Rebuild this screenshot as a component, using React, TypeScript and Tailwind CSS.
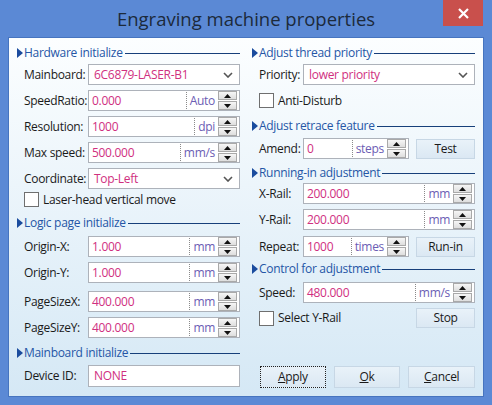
import { ReactNode } from "react";

const PINK = "text-[#d0307f]";
const UNIT = "text-[#6b5db4]";

function Heading({ label }: { label: string }) {
  return (
    <div className="h-[14px] flex items-center">
      <svg className="w-[6px] h-[10px] ml-[1px] mr-[1px]" viewBox="0 0 6 10">
        <path d="M0 0 L6 5 L0 10 Z" fill="#1b4c9e" />
      </svg>
      <span className="text-[#2556a6] leading-none whitespace-nowrap">{label}</span>
      <div className="flex-1 h-px bg-[#173f7a] ml-[2px]" />
    </div>
  );
}

function Spinner() {
  return (
    <div className="flex flex-col gap-px w-[19px] mr-[2px] shrink-0">
      <div className="h-[9px] border border-[#a9a9a9] bg-gradient-to-b from-[#f6f6f6] to-[#dedede] flex items-center justify-center">
        <svg className="w-[7px] h-[4px]" viewBox="0 0 7 4">
          <path d="M0 4 L3.5 0 L7 4 Z" fill="#111" />
        </svg>
      </div>
      <div className="h-[9px] border border-[#a9a9a9] bg-gradient-to-b from-[#f6f6f6] to-[#dedede] flex items-center justify-center">
        <svg className="w-[7px] h-[4px]" viewBox="0 0 7 4">
          <path d="M0 0 L7 0 L3.5 4 Z" fill="#111" />
        </svg>
      </div>
    </div>
  );
}

function NumBox({ value, unit, className = "" }: { value: string; unit: string; className?: string }) {
  return (
    <div className={`h-[21px] bg-white border border-[#adb2ba] flex items-center ${className}`}>
      <span className={`flex-1 pl-[3px] ${PINK}`}>{value}</span>
      <span className={`h-[17px] border-l border-dotted border-[#8a8a8a] pl-[3px] pr-[3px] flex items-center ${UNIT}`}>
        {unit}
      </span>
      <Spinner />
    </div>
  );
}

function Combo({ value, className = "" }: { value: string; className?: string }) {
  return (
    <div className={`h-[21px] bg-white border border-[#adb2ba] flex items-center ${className}`}>
      <span className={`flex-1 pl-[5px] ${PINK}`}>{value}</span>
      <svg className="w-[10px] h-[6px] mr-[6px]" viewBox="0 0 10 6">
        <path d="M1 1 L5 5 L9 1" fill="none" stroke="#555" strokeWidth="1.6" />
      </svg>
    </div>
  );
}

function Row({ label, labelW, children, className = "" }: { label: string; labelW: string; children: ReactNode; className?: string }) {
  return (
    <div className={`flex items-center ${className}`}>
      <span className={`pl-[8px] ${labelW} shrink-0 whitespace-nowrap text-[#1a1a1a]`}>{label}</span>
      {children}
    </div>
  );
}

function Check({ label, className = "" }: { label: string; className?: string }) {
  return (
    <div className={`flex items-center pl-[8px] ${className}`}>
      <div className="w-[15px] h-[15px] bg-white border border-[#6f6f6f]" />
      <span className="ml-[4px] text-[#1a1a1a]">{label}</span>
    </div>
  );
}

function Btn({ children, className = "" }: { children: ReactNode; className?: string }) {
  return (
    <div
      className={`flex items-center justify-center bg-gradient-to-b from-[#e9f2f9] to-[#dbe8f3] border border-[#c7d7e5] text-[#1a1a1a] ${className}`}
    >
      {children}
    </div>
  );
}

export default function App() {
  return (
    <div className="w-[492px] h-[405px] bg-[#5b89d5] flex flex-col font-['Open_Sans',sans-serif] text-[12px] tracking-[-0.3px] leading-none">
      <div className="h-[37px] relative flex items-center justify-center">
        <span className="text-[18.5px] tracking-normal text-[#1c2a3b] mt-[1px]">Engraving machine properties</span>
        <div className="absolute right-[9px] top-0 w-[40px] h-[26px] bg-[#c9504c] flex items-center justify-center">
          <svg className="w-[11px] h-[11px]" viewBox="0 0 11 11">
            <path d="M1 1 L10 10 M10 1 L1 10" stroke="#fff" strokeWidth="2.2" />
          </svg>
        </div>
      </div>
      <div className="mx-[8px] h-[360px] bg-gradient-to-b from-[#fcfeff] to-[#d5e8f5] border border-[#4674bf] flex pl-[7px]">
        <div className="w-[224px] flex flex-col pt-[8px]">
          <Heading label="Hardware initialize" />
          <Row label="Mainboard:" labelW="w-[72px]" className="mt-[4px]">
            <Combo value="6C6879-LASER-B1" className="w-[152px]" />
          </Row>
          <Row label="SpeedRatio:" labelW="w-[72px]" className="mt-[5px]">
            <NumBox value="0.000" unit="Auto" className="w-[152px]" />
          </Row>
          <Row label="Resolution:" labelW="w-[72px]" className="mt-[5px]">
            <NumBox value="1000" unit="dpi" className="w-[152px]" />
          </Row>
          <Row label="Max speed:" labelW="w-[72px]" className="mt-[5px]">
            <NumBox value="500.000" unit="mm/s" className="w-[152px]" />
          </Row>
          <Row label="Coordinate:" labelW="w-[72px]" className="mt-[5px]">
            <Combo value="Top-Left" className="w-[152px]" />
          </Row>
          <Check label="Laser-head vertical move" className="mt-[3px]" />
          <div className="mt-[9px]">
            <Heading label="Logic page initialize" />
          </div>
          <Row label="Origin-X:" labelW="w-[72px]" className="mt-[6px]">
            <NumBox value="1.000" unit="mm" className="w-[152px]" />
          </Row>
          <Row label="Origin-Y:" labelW="w-[72px]" className="mt-[5px]">
            <NumBox value="1.000" unit="mm" className="w-[152px]" />
          </Row>
          <Row label="PageSizeX:" labelW="w-[72px]" className="mt-[8px]">
            <NumBox value="400.000" unit="mm" className="w-[152px]" />
          </Row>
          <Row label="PageSizeY:" labelW="w-[72px]" className="mt-[5px]">
            <NumBox value="400.000" unit="mm" className="w-[152px]" />
          </Row>
          <div className="mt-[8px]">
            <Heading label="Mainboard initialize" />
          </div>
          <Row label="Device ID:" labelW="w-[72px]" className="mt-[5px]">
            <div className="w-[152px] h-[22px] bg-white border border-[#adb2ba] flex items-center">
              <span className={`pl-[5px] ${PINK}`}>NONE</span>
            </div>
          </Row>
        </div>

        <div className="w-[224px] ml-[11px] flex flex-col pt-[8px]">
          <Heading label="Adjust thread priority" />
          <Row label="Priority:" labelW="w-[52px]" className="mt-[4px]">
            <Combo value="lower priority" className="w-[172px]" />
          </Row>
          <Check label="Anti-Disturb" className="mt-[8px]" />
          <div className="mt-[11px]">
            <Heading label="Adjust retrace feature" />
          </div>
          <Row label="Amend:" labelW="w-[52px]" className="mt-[5px]">
            <NumBox value="0" unit="steps" className="w-[106px]" />
            <Btn className="ml-[7px] w-[59px] h-[20px]">Test</Btn>
          </Row>
          <div className="mt-[7px]">
            <Heading label="Running-in adjustment" />
          </div>
          <Row label="X-Rail:" labelW="w-[52px]" className="mt-[3px]">
            <NumBox value="200.000" unit="mm" className="w-[172px]" />
          </Row>
          <Row label="Y-Rail:" labelW="w-[52px]" className="mt-[5px]">
            <NumBox value="200.000" unit="mm" className="w-[172px]" />
          </Row>
          <Row label="Repeat:" labelW="w-[52px]" className="mt-[6px]">
            <NumBox value="1000" unit="times" className="w-[106px]" />
            <Btn className="ml-[7px] w-[59px] h-[20px]">Run-in</Btn>
          </Row>
          <div className="mt-[5px]">
            <Heading label="Control for adjustment" />
          </div>
          <Row label="Speed:" labelW="w-[52px]" className="mt-[6px]">
            <NumBox value="480.000" unit="mm/s" className="w-[172px]" />
          </Row>
          <div className="mt-[5px] flex items-center justify-between">
            <Check label="Select Y-Rail" />
            <Btn className="w-[59px] h-[20px]">Stop</Btn>
          </div>
          <div className="mt-[38px] flex gap-[8px] pl-[9px]">
            <Btn className="w-[66px] h-[22px] !border-dotted !border-[#222]">
              <span>
                <span className="underline">A</span>pply
              </span>
            </Btn>
            <Btn className="w-[67px] h-[22px]">
              <span>
                <span className="underline">O</span>k
              </span>
            </Btn>
            <Btn className="w-[67px] h-[22px]">
              <span>
                <span className="underline">C</span>ancel
              </span>
            </Btn>
          </div>
        </div>
      </div>
    </div>
  );
}
